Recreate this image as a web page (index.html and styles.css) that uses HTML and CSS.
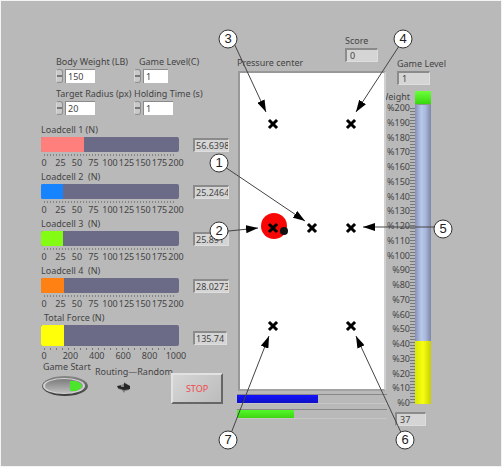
FILE: index.html
```html
<!DOCTYPE html>
<html lang="en">
<head>
<meta charset="utf-8">
<title>Balance training panel</title>
<link rel="stylesheet" href="styles.css">
</head>
<body>
<main class="panel">
  <section class="left">
    <form class="controls">
      <div class="control">
        <label for="weight">Body Weight (LB)</label>
        <div class="field"><span class="spin"></span><input id="weight" value="150"></div>
      </div>
      <div class="control inset">
        <label for="level">Game Level(C)</label>
        <div class="field short"><span class="spin"></span><input id="level" value="1"></div>
      </div>
      <div class="control">
        <label for="radius">Target Radius (px)</label>
        <div class="field"><span class="spin"></span><input id="radius" value="20"></div>
      </div>
      <div class="control">
        <label for="hold">Holding Time (s)</label>
        <div class="field"><span class="spin"></span><input id="hold" value="1"></div>
      </div>
    </form>

    <div class="gauge">
      <div class="name">Loadcell 1 (N)</div>
      <div class="track"><div class="fill pink"></div></div>
      <output class="readout">56.6398</output>
      <div class="scale"><span>0</span><span>25</span><span>50</span><span>75</span><span>100</span><span>125</span><span>150</span><span>175</span><span>200</span></div>
    </div>
    <div class="gauge">
      <div class="name">Loadcell 2&nbsp; (N)</div>
      <div class="track"><div class="fill blue"></div></div>
      <output class="readout">25.2464</output>
      <div class="scale"><span>0</span><span>25</span><span>50</span><span>75</span><span>100</span><span>125</span><span>150</span><span>175</span><span>200</span></div>
    </div>
    <div class="gauge">
      <div class="name">Loadcell 3&nbsp; (N)</div>
      <div class="track"><div class="fill green"></div></div>
      <output class="readout">25.891</output>
      <div class="scale"><span>0</span><span>25</span><span>50</span><span>75</span><span>100</span><span>125</span><span>150</span><span>175</span><span>200</span></div>
    </div>
    <div class="gauge">
      <div class="name">Loadcell 4&nbsp; (N)</div>
      <div class="track"><div class="fill orange"></div></div>
      <output class="readout">28.0273</output>
      <div class="scale"><span>0</span><span>25</span><span>50</span><span>75</span><span>100</span><span>125</span><span>150</span><span>175</span><span>200</span></div>
    </div>
    <div class="gauge total">
      <div class="name">Total Force (N)</div>
      <div class="track"><div class="fill yellow"></div></div>
      <output class="readout">135.74</output>
      <div class="scale"><span>0</span><span>200</span><span>400</span><span>600</span><span>800</span><span>1000</span></div>
    </div>

    <div class="actions">
      <div class="start">
        <label for="start">Game Start</label>
        <button id="start" class="oval" type="button" aria-label="Game Start">
          <svg viewBox="0 0 48 22" width="48" height="22">
            <defs>
              <linearGradient id="rim" x1="0" y1="0" x2="0" y2="1"><stop offset="0" stop-color="#888"/><stop offset="1" stop-color="#3c3c3c"/></linearGradient>
              <linearGradient id="face" x1="0" y1="0" x2="0" y2="1"><stop offset="0" stop-color="#7c7c7c"/><stop offset="1" stop-color="#bdbdbd"/></linearGradient>
            </defs>
            <ellipse cx="24" cy="11" rx="23" ry="10" fill="url(#rim)"/>
            <ellipse cx="23" cy="11" rx="21" ry="8" fill="#d2d2d2"/>
            <ellipse cx="23" cy="11" rx="19" ry="7" fill="url(#face)"/>
            <path d="M29 6h6q5 2 6 5q-1 3-6 5h-6z" fill="#4be52c"/>
          </svg>
        </button>
      </div>
      <div class="mode">
        <label for="mode">Routing—Random</label>
        <button id="mode" class="knob" type="button" aria-label="Routing or random">
          <svg viewBox="0 0 14 12" width="14" height="12">
            <path d="M1 5l6-2V1l6 4-1 4-4 1-1 2-2-3-4-1z" fill="#777"/>
            <path d="M0 5l7-1V2l6 3v3l-6 1-6-2z" fill="#252525"/>
            <path d="M4 5h3" stroke="#ddd" stroke-width="1"/>
          </svg>
        </button>
      </div>
      <button class="stop" type="button">STOP</button>
    </div>
  </section>

  <section class="middle">
    <header class="heading">
      <h1>Pressure center</h1>
      <div class="score">
        <div>Score</div>
        <output class="readout">0</output>
      </div>
    </header>
    <div class="plot">
      <svg viewBox="240 73 144 316">
        <circle cx="274" cy="226" r="13" fill="#f80606"/>
        <circle cx="284" cy="231" r="4" fill="#111"/>
        <g stroke="#000" stroke-width="3" stroke-linecap="square">
          <path d="M270 121l6 6m0-6l-6 6"/>
          <path d="M348 121l6 6m0-6l-6 6"/>
          <path d="M270 225l6 6m0-6l-6 6"/>
          <path d="M309 225l6 6m0-6l-6 6"/>
          <path d="M348 225l6 6m0-6l-6 6"/>
          <path d="M270 323l6 6m0-6l-6 6"/>
          <path d="M348 323l6 6m0-6l-6 6"/>
        </g>
      </svg>
    </div>
    <div class="progress"><div class="done navy"></div></div>
    <div class="progress"><div class="done lime"></div></div>

    <svg class="callouts" viewBox="237 0 150 467">
      <defs>
        <marker id="head" viewBox="0 0 12 8" refX="12" refY="4" markerWidth="12" markerHeight="8" markerUnits="userSpaceOnUse" orient="auto"><path d="M0 0l12 4-12 4z"/></marker>
      </defs>
      <g stroke="#444" stroke-width="1">
        <path marker-end="url(#head)" d="M219 163L305 221"/>
        <path marker-end="url(#head)" d="M219 232L258 228"/>
        <path marker-end="url(#head)" d="M232 39L266 112"/>
        <path marker-end="url(#head)" d="M403 40L356 112"/>
        <path marker-end="url(#head)" d="M443 227L363 227"/>
        <path marker-end="url(#head)" d="M405 441L356 336"/>
        <path marker-end="url(#head)" d="M228 441L269 336"/>
      </g>
      <g fill="#fff" stroke="#333">
        <circle cx="219" cy="163" r="9"/>
        <circle cx="219" cy="231" r="9"/>
        <circle cx="228" cy="39" r="9"/>
        <circle cx="403" cy="39" r="9"/>
        <circle cx="443" cy="229" r="9"/>
        <circle cx="405" cy="440" r="9"/>
        <circle cx="228" cy="440" r="9"/>
      </g>
      <g class="digits">
        <text x="219" y="167">1</text>
        <text x="219" y="235">2</text>
        <text x="228" y="43">3</text>
        <text x="403" y="43">4</text>
        <text x="443" y="233">5</text>
        <text x="405" y="444">6</text>
        <text x="228" y="444">7</text>
      </g>
    </svg>
  </section>

  <section class="right">
    <div class="level">
      <div>Game Level</div>
      <output class="readout">1</output>
    </div>
    <div class="tank">
      <div class="legend">
        <div class="title">Weight</div>
        <div class="marks">
          <span>%200</span><span>%190</span><span>%180</span><span>%170</span><span>%160</span><span>%150</span><span>%140</span><span>%130</span><span>%120</span><span>%110</span><span>%100</span><span>%90</span><span>%80</span><span>%70</span><span>%60</span><span>%50</span><span>%40</span><span>%30</span><span>%20</span><span>%10</span><span>%0</span>
        </div>
      </div>
      <div class="ticks"></div>
      <div class="column"><div class="cap"></div><div class="liquid"></div></div>
    </div>
    <output class="readout percent">37</output>
  </section>
</main>
</body>
</html>
```
FILE: styles.css
```css
* { box-sizing: border-box; }

body {
  margin: 0;
  background: #b9b9b9;
  color: #444;
  font: 9px/12px "Noto Sans", sans-serif;
}

input, button { font: inherit; color: inherit; }

.panel {
  display: grid;
  grid-template-columns: 196fr 150fr 114fr;
  min-height: 100vh;
  padding-left: 40px;
  border: 1px solid #f4f4f4;
  overflow: hidden;
}

.left { padding-top: 55px; }

.controls {
  display: grid;
  grid-template-columns: 78px 1fr;
  row-gap: 5px;
  padding-left: 15px;
  margin-bottom: 9px;
}

.control label { display: block; white-space: nowrap; }
.inset label { padding-left: 5px; }

.field {
  display: flex;
  gap: 2px;
  width: 39px;
  margin-top: 1px;
}
.field.short { width: 34px; }

.spin {
  flex: none;
  width: 7px;
  height: 14px;
  border: 1px solid #8d8d8d;
  border-left-color: #d8d8d8;
  border-radius: 3px;
  background: linear-gradient(#c9c9c9 45%, #777 45%, #777 55%, #c9c9c9 55%);
}

.field input {
  width: 100%;
  min-width: 0;
  height: 14px;
  padding: 0 2px;
  border: 0;
  border-top: 1px solid #8a8a8a;
  border-left: 1px solid #8a8a8a;
  background: #fff;
}

.gauge {
  display: grid;
  grid-template: 12px 15px 17px / minmax(0, 138fr) minmax(0, 36fr);
  column-gap: 14px;
  row-gap: 1px;
  padding-right: 8px;
  height: 47px;
}

.name { grid-column: 1 / -1; }

.track {
  border-radius: 2px;
  background: #6b6b88;
  overflow: hidden;
}

.fill { height: 100%; }
.pink { width: 31%; background: #ff7f7d; }
.blue { width: 16%; background: #1684ff; }
.green { width: 16%; background: #83fb13; }
.orange { width: 17%; background: #ff8114; }
.yellow { width: 17%; background: #ffff0a; }

.readout {
  display: block;
  height: 14px;
  padding: 0 3px;
  border: 1px solid #dedede;
  border-top: 2px solid #8b8b8b;
  border-left: 2px solid #8b8b8b;
  background: #d5d5d5;
  line-height: 12px;
  white-space: nowrap;
  overflow: hidden;
}

.gauge .readout { margin-top: 1px; padding: 0 1px; }

.scale {
  grid-column: 1;
  display: flex;
  justify-content: space-between;
  margin: 0 3px;
  padding-top: 4px;
  background: repeating-linear-gradient(90deg, #858585 0 1px, transparent 1px 3px) 0 1px / 100% 2px no-repeat;
}
.scale span {
  display: flex;
  justify-content: center;
  width: 0;
}

.total {
  grid-template-rows: 12px 21px 15px;
  height: 49px;
}
.total .name { padding-left: 3px; }
.total .readout { margin: 6px 2px 0 0; }
.total .scale {
  padding-top: 3px;
  background-image: repeating-linear-gradient(90deg, #777 0 1px, transparent 1px 6px);
}

.actions {
  display: flex;
  align-items: flex-start;
  padding-right: 14px;
}
.start label, .mode label { display: block; white-space: nowrap; }
.start label { padding-left: 2px; }

.oval, .knob {
  display: block;
  padding: 0;
  border: 0;
  background: none;
}
.oval svg, .knob svg { display: block; }
.start { width: 54px; }
.oval { margin-top: 2px; }
.mode { width: 76px; padding-top: 5px; }
.knob { margin: 3px 0 0 22px; }

.stop {
  flex: 1;
  height: 31px;
  margin-top: 12px;
  padding: 0;
  border: 2px solid #666;
  border-top-color: #e2e2e2;
  border-left-color: #e2e2e2;
  background: linear-gradient(135deg, #d6d6d6, #bcbcbc);
  color: #f0484c;
}

.middle {
  position: relative;
  z-index: 1;
  padding-top: 34px;
}

.heading {
  display: flex;
  align-items: flex-end;
  justify-content: space-between;
  padding-right: 9px;
}
.heading h1 { margin: 0; font: inherit; white-space: nowrap; }
.score { width: 33px; margin-bottom: 7px; }
.score .readout, .level .readout { margin-top: 1px; }

.plot {
  margin: 2px 1px 3px;
  border: 2px solid #989898;
  border-right-color: #d0d0d0;
  border-bottom-color: #a2a2a2;
  background: #fff;
}
.plot svg { display: block; width: 100%; }

.progress {
  height: 10px;
  margin-bottom: 5px;
  border-top: 1px solid #888;
  border-bottom: 1px solid #c6c6c6;
}
.done { height: 8px; }
.navy { width: 54%; background: linear-gradient(#1212ff, #1010c4); }
.lime { width: 38%; background: linear-gradient(#52f92a, #3fd511); }

.callouts {
  position: absolute;
  top: -1px;
  left: 0;
  width: 100%;
  overflow: visible;
  pointer-events: none;
}
.digits {
  font: 13px "Liberation Sans", sans-serif;
  fill: #222;
  text-anchor: middle;
}

.right { padding-top: 57px; }

.level { width: 43px; margin-left: 10px; white-space: nowrap; }
.level .readout { width: 33px; }

.tank {
  display: flex;
  height: 313px;
  margin-top: 6px;
}

.legend { width: 23px; }
.title, .marks span {
  display: flex;
  justify-content: flex-end;
}
.title { height: 11px; line-height: 11px; }
.marks {
  display: flex;
  flex-direction: column;
  justify-content: space-between;
  height: 307px;
}

.ticks {
  width: 5px;
  height: 296px;
  margin-top: 17px;
  background: repeating-linear-gradient(#777 0 1px, transparent 1px 3px);
}

.column {
  display: flex;
  flex-direction: column;
  width: 16px;
  background: linear-gradient(90deg, #8490b8, #b8c8ea 40%, #a9b9dc 65%, #7d86a8);
}
.cap { height: 14px; background: linear-gradient(#6dff3c, #36d80c); border-bottom: 1px solid #8b9b8b; }
.liquid {
  height: 20%;
  margin-top: auto;
  background: linear-gradient(90deg, #d8e800, #f6ff12 50%, #c9cf00);
}

.percent { width: 31px; margin: 8px 0 0 8px; }
```
